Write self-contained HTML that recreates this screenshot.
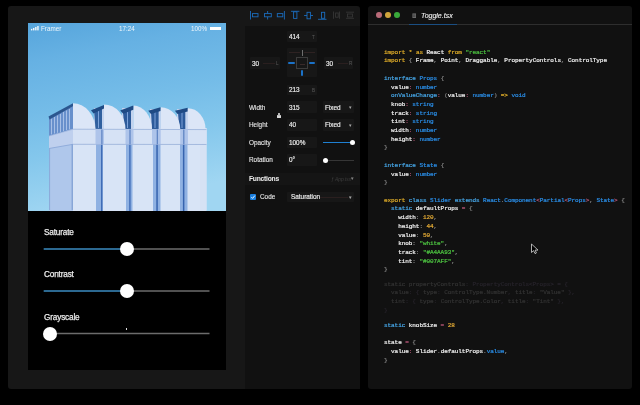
<!DOCTYPE html>
<html><head><meta charset="utf-8">
<style>
*{margin:0;padding:0;box-sizing:border-box}
html,body{width:640px;height:405px;overflow:hidden;background:#000}
body{position:relative;font-family:"Liberation Sans",sans-serif}
.a{position:absolute}
.lab,.pl,.iv,.code{will-change:transform}
#win1{position:absolute;left:8px;top:6px;width:352px;height:383px;background:#171717;border-radius:3px;overflow:hidden}
#props{position:absolute;left:245px;top:26px;width:115px;height:363px;background:#111111}
#phone{position:absolute;left:28px;top:23px;width:198px;height:347px;background:#000;overflow:hidden}
#win2{position:absolute;left:368px;top:6px;width:264px;height:383px;background:#111111;border-radius:3px;overflow:hidden}
.code{position:absolute;left:384.4px;font-family:"Liberation Mono",monospace;font-size:6.0px;letter-spacing:-0.064px;line-height:8px;white-space:pre;color:#f0f0f0;-webkit-text-stroke:0.22px currentColor}
.k{color:#dcaa28}.b{color:#45a3e3}.t{color:#2a8de6}.p{color:#a8506e}.g{color:#808080}.s{color:#4cc040}.n{color:#e0a834}.w{color:#ececec}
.d{color:#323232}.dd{color:#26232a}
.lab{position:absolute;color:#ececec;font-size:8.2px;letter-spacing:-0.15px;line-height:9px;white-space:nowrap;-webkit-text-stroke:0.25px currentColor}
.trk{position:absolute;height:1.4px;background:#6a6a6a}
.fil{position:absolute;height:1.4px;background:#3b8cc2}
.knob{position:absolute;width:14px;height:14px;border-radius:50%;background:#fff}
.pl{position:absolute;color:#e4e4e4;font-size:6.4px;line-height:7px;white-space:nowrap;-webkit-text-stroke:0.12px currentColor}
.inp{position:absolute;background:#171717;border-radius:1px}
.iv{position:absolute;color:#f0f0f0;font-size:6.4px;line-height:7px;white-space:nowrap;-webkit-text-stroke:0.15px currentColor}
.ic{position:absolute;background:#1f80d2}
.icg{position:absolute;background:#3a3a3a}
</style></head><body>
<div id="win1"></div>
<div id="props"></div>

<!-- toolbar icons -->
<div class="a" style="left:249px;top:10px;width:112px;height:11px">
</div>
<svg class="a" style="left:0;top:0" width="640" height="30">
  <g fill="none" stroke="#1b6cbc" stroke-width="0.9">
    <line x1="250.5" y1="11" x2="250.5" y2="19.5"/>
    <rect x="252.5" y="13.6" width="5.5" height="3.2"/>
    <line x1="267.6" y1="11" x2="267.6" y2="13.6"/><line x1="267.6" y1="16.8" x2="267.6" y2="19.5"/>
    <rect x="264.5" y="13.6" width="6.8" height="3.2"/>
    <rect x="277.3" y="13.6" width="5.5" height="3.2"/>
    <line x1="284.4" y1="11" x2="284.4" y2="19.5"/>
    <line x1="291" y1="11.3" x2="299.4" y2="11.3"/>
    <rect x="293.6" y="11.8" width="3.3" height="6.6"/>
    <line x1="304.1" y1="15.5" x2="307" y2="15.5"/><line x1="310.4" y1="15.5" x2="313" y2="15.5"/>
    <rect x="307" y="12.3" width="3.4" height="6.5"/>
    <line x1="318" y1="19.3" x2="326.5" y2="19.3"/>
    <rect x="321.5" y="12.3" width="3.2" height="6"/>
  </g>
  <g fill="none" stroke="#363636" stroke-width="0.9">
    <line x1="333.5" y1="11.5" x2="333.5" y2="18.8"/>
    <line x1="339.5" y1="11.5" x2="339.5" y2="18.8"/>
    <rect x="335.6" y="13" width="2.6" height="4.2"/>
    <line x1="346" y1="12.2" x2="354" y2="12.2"/>
    <line x1="346" y1="18.3" x2="354" y2="18.3"/>
    <rect x="347.5" y="14" width="5" height="3"/>
  </g>
</svg>

<!-- position widget -->
<div class="inp" style="left:287px;top:31px;width:30px;height:11px"></div>
<div class="iv" style="left:289px;top:33px">414</div>
<div class="pl" style="left:312.3px;top:33.5px;color:#5a5a5a;font-size:4.6px;-webkit-text-stroke:0px">T</div>

<div class="inp" style="left:250px;top:57px;width:30px;height:11.5px"></div>
<div class="iv" style="left:252px;top:59.7px">30</div>
<div class="a" style="left:263px;top:63px;width:12px;height:1px;background:#2a1f1f"></div>
<div class="pl" style="left:276px;top:60px;color:#5a5a5a;font-size:4.6px;-webkit-text-stroke:0px">L</div>

<div class="inp" style="left:324px;top:57px;width:29px;height:11.5px"></div>
<div class="iv" style="left:325.5px;top:59.7px">30</div>
<div class="a" style="left:338px;top:63px;width:10px;height:1px;background:#2a1f1f"></div>
<div class="pl" style="left:348.8px;top:60px;color:#5a5a5a;font-size:4.6px;-webkit-text-stroke:0px">R</div>

<div class="inp" style="left:287px;top:48px;width:30px;height:28.5px"></div>
<div class="a" style="left:289px;top:52.2px;width:11px;height:0.8px;background:#2e2222"></div>
<div class="a" style="left:304px;top:52.2px;width:11px;height:0.8px;background:#2e2222"></div>
<div class="a" style="left:301.5px;top:49.5px;width:1px;height:6px;background:#6e6e6e"></div>
<div class="a" style="left:296.1px;top:57.1px;width:11.6px;height:11.6px;border:1px solid #3c3c3c"></div>
<div class="a" style="left:300px;top:64px;width:4.5px;height:0.8px;background:#3a2a2a"></div>
<div class="a" style="left:288px;top:62px;width:6.8px;height:1.5px;border-radius:1px;background:#1b72c8"></div>
<div class="a" style="left:308.6px;top:62px;width:6.8px;height:1.5px;border-radius:1px;background:#1b72c8"></div>
<div class="a" style="left:301px;top:70px;width:1.6px;height:6px;border-radius:1px;background:#1b72c8"></div>

<div class="inp" style="left:287px;top:85px;width:30px;height:10px"></div>
<div class="iv" style="left:289px;top:85.8px">213</div>
<div class="pl" style="left:312.3px;top:86.5px;color:#5a5a5a;font-size:4.6px;-webkit-text-stroke:0px">B</div>

<!-- width / height / opacity / rotation -->
<div class="pl" style="left:249px;top:103.5px">Width</div>
<div class="inp" style="left:287px;top:101px;width:30px;height:12px"></div>
<div class="iv" style="left:288.5px;top:103.5px">315</div>
<div class="inp" style="left:323px;top:101px;width:31px;height:12px"></div>
<div class="iv" style="left:325px;top:103.5px">Fixed</div>
<div class="pl" style="left:349px;top:104px;color:#aaa;font-size:5px;-webkit-text-stroke:0px">&#9662;</div>

<div class="a" style="left:277.4px;top:115px;width:3.5px;height:3.2px;background:#d8d8d8;border-radius:0.6px"></div>
<div class="a" style="left:278.1px;top:113.2px;width:2.1px;height:2.6px;border:0.7px solid #bbb;border-bottom:none;border-radius:1px 1px 0 0"></div>

<div class="pl" style="left:249px;top:121px">Height</div>
<div class="inp" style="left:287px;top:119px;width:30px;height:11.5px"></div>
<div class="iv" style="left:288.5px;top:121px">40</div>
<div class="inp" style="left:323px;top:119px;width:31px;height:11.5px"></div>
<div class="iv" style="left:325px;top:121px">Fixed</div>
<div class="pl" style="left:349px;top:121.5px;color:#aaa;font-size:5px;-webkit-text-stroke:0px">&#9662;</div>

<div class="pl" style="left:249px;top:138.5px">Opacity</div>
<div class="inp" style="left:287px;top:136.5px;width:30px;height:11.5px"></div>
<div class="iv" style="left:288.5px;top:138.5px">100%</div>
<div class="a" style="left:323px;top:142.3px;width:29px;height:1.2px;background:#1f80d2"></div>
<div class="a" style="left:349.5px;top:140.3px;width:5px;height:5px;border-radius:50%;background:#fff"></div>

<div class="pl" style="left:249px;top:156px">Rotation</div>
<div class="inp" style="left:287px;top:154px;width:30px;height:11.5px"></div>
<div class="iv" style="left:288.5px;top:156px">0°</div>
<div class="a" style="left:325px;top:159.5px;width:29px;height:1px;background:#363636"></div>
<div class="a" style="left:322.5px;top:157.7px;width:5px;height:5px;border-radius:50%;background:#fff"></div>

<!-- functions -->
<div class="a" style="left:245px;top:173px;width:115px;height:11.5px;background:#151515"></div>
<div class="pl" style="left:249px;top:175.2px;font-weight:bold;font-size:6.7px;letter-spacing:-0.22px;color:#e8e8e8;-webkit-text-stroke:0.05px currentColor">Functions</div>
<div class="pl" style="left:330.5px;top:175.8px;color:#3e3e3e;font-size:4.9px;font-style:italic;-webkit-text-stroke:0px">ƒ App.tsx</div>
<div class="pl" style="left:351px;top:175px;color:#888;font-size:4.5px">&#9662;</div>

<div class="a" style="left:249.5px;top:194.2px;width:6px;height:6px;background:#1a7fe0;border-radius:1px"></div>
<svg class="a" style="left:249.5px;top:194.2px" width="6" height="6"><path d="M1.3 3.1 L2.6 4.4 L4.8 1.6" stroke="#fff" stroke-width="0.9" fill="none"/></svg>
<div class="pl" style="left:260px;top:193px">Code</div>
<div class="inp" style="left:287px;top:191.5px;width:67px;height:10.5px"></div>
<div class="iv" style="left:290.5px;top:193px">Saturation</div>
<div class="a" style="left:320px;top:196.5px;width:28px;height:0.6px;background:#2a1f1f"></div>
<div class="pl" style="left:349px;top:193.5px;color:#aaa;font-size:4.5px">&#9662;</div>

<!-- phone -->
<div id="phone">
<svg class="a" style="left:0;top:0" width="198" height="187.6" viewBox="28 23 198 187.6" preserveAspectRatio="none">
  <defs>
    <linearGradient id="sky" x1="0" y1="0" x2="0.2" y2="1">
      <stop offset="0" stop-color="#56a5dc"/>
      <stop offset="0.2" stop-color="#66b1e3"/>
      <stop offset="0.47" stop-color="#74bce8"/>
      <stop offset="0.7" stop-color="#84c7ec"/>
      <stop offset="1" stop-color="#a0d6f2"/>
    </linearGradient>
    <linearGradient id="face" x1="0" y1="0" x2="0" y2="1">
      <stop offset="0" stop-color="#c5d6f0"/>
      <stop offset="1" stop-color="#b4c8ea"/>
    </linearGradient>
  </defs>
  <rect x="28" y="23" width="198" height="188" fill="url(#sky)"/>
  <!-- lower body -->
  <rect x="72" y="128" width="134.5" height="83" fill="#d8e4f6"/>
  <rect x="200" y="128" width="6.5" height="82" fill="#d6e2f4"/>
  <!-- left face -->
  <polygon points="49,117 73,104 73,211 49,211" fill="#afc7eb"/>
  <line x1="49.6" y1="148" x2="49.6" y2="210" stroke="#7f9fd2" stroke-width="0.8"/>
  <line x1="72.2" y1="128" x2="72.2" y2="210" stroke="#6f92cc" stroke-width="0.9"/>
  <!-- gaps -->
  <rect x="96" y="110" width="7" height="101" fill="#8fb1e2"/>
  <rect x="101" y="110" width="1.4" height="101" fill="#3f6cb6"/>
  <rect x="126" y="110" width="6.5" height="101" fill="#8fb1e2"/>
  <rect x="129.2" y="110" width="1.4" height="101" fill="#3f6cb6"/>
  <rect x="153" y="110" width="7.5" height="101" fill="#8fb1e2"/>
  <rect x="156.3" y="110" width="1.5" height="101" fill="#3663ae"/>
  <rect x="180" y="110" width="7.5" height="101" fill="#8fb1e2"/>
  <rect x="182.9" y="110" width="1.5" height="101" fill="#3663ae"/>
  <!-- glass -->
  <polygon points="49,119 73,106 73,129 49,136" fill="#6890cc"/>
  <g stroke="#c2d4f0" stroke-width="0.7">
    <line x1="51.5" y1="118.5" x2="51.5" y2="134.5"/>
    <line x1="54.5" y1="117" x2="54.5" y2="133.5"/>
    <line x1="57.5" y1="115.5" x2="57.5" y2="132.8"/>
    <line x1="60.5" y1="114" x2="60.5" y2="132"/>
    <line x1="63.5" y1="112" x2="63.5" y2="131"/>
    <line x1="66.5" y1="110.5" x2="66.5" y2="130.2"/>
    <line x1="69.5" y1="109" x2="69.5" y2="129.5"/>
  </g>
  <rect x="94" y="108" width="10" height="21" fill="#c3d3ee"/>
  <rect x="122" y="108" width="11.5" height="21" fill="#c3d3ee"/>
  <rect x="150" y="109" width="10.7" height="20" fill="#c3d3ee"/>
  <rect x="177" y="109" width="11" height="20" fill="#c3d3ee"/>
  <polygon points="94,110 102,108 102,129 95.5,129" fill="#30609f"/>
  <polygon points="123,112 131,109 131,129 124.5,129" fill="#2c5a9a"/>
  <polygon points="151,112 158.6,109.5 158.6,129 152,129" fill="#2c5a9a"/>
  <polygon points="178,112 185.3,110 185.3,129 179.2,129" fill="#2c5a9a"/>
  <g stroke="#86aae0" stroke-width="0.9">
    <line x1="98.5" y1="110" x2="98.5" y2="128"/>
    <line x1="127.5" y1="112" x2="127.5" y2="128"/>
    <line x1="155" y1="112" x2="155" y2="128"/>
    <line x1="182" y1="112" x2="182" y2="128"/>
  </g>
  <!-- roofs -->
  <path d="M73.0 129.5 L73.0 103.3 A22.3 26.2 0 0 1 95.3 129.5 Z" fill="#dce6f7"/>
  <path d="M104.0 129.5 L104.0 104.4 A21.5 25.1 0 0 1 125.5 129.5 Z" fill="#dce6f7"/>
  <path d="M133.5 129.5 L133.5 105.6 A18.4 23.9 0 0 1 151.9 129.5 Z" fill="#dce6f7"/>
  <path d="M160.7 129.5 L160.7 107.2 A19.6 22.3 0 0 1 180.3 129.5 Z" fill="#dce6f7"/>
  <path d="M187.9 129.5 L187.9 108.2 A17.7 21.3 0 0 1 205.6 129.5 Z" fill="#dce6f7"/>
  <!-- dark roof strips -->
  <polygon points="48.5,116.5 73,103.3 73,106.3 49.5,119.5" fill="#2b568f"/>
  <polygon points="91,110.2 104,105.1 104,108.6 93.5,113.5" fill="#1f4a84"/>
  <polygon points="120.2,110.4 133.3,105.6 133.3,109.8 123.2,113.8" fill="#1f4a84"/>
  <polygon points="148.2,110.8 160.5,107.3 160.5,111 151,114" fill="#1f4a84"/>
  <polygon points="174.9,110.8 187.6,107.8 187.6,111.5 177.5,114" fill="#1f4a84"/>
  <!-- band -->
  <rect x="73" y="129" width="133.5" height="15.3" fill="#d6e2f5"/>
  <polygon points="49,136 73,129 73,144.3 49,148.5" fill="#bfd0ee"/>
  <line x1="73" y1="129.2" x2="206.5" y2="129.6" stroke="#90aad6" stroke-width="0.7"/>
  <line x1="73" y1="144.3" x2="206.5" y2="144.5" stroke="#8ea8d4" stroke-width="0.7"/>
  <line x1="49" y1="148.5" x2="73" y2="144.3" stroke="#7f9fd2" stroke-width="0.7"/>
  <line x1="49" y1="136" x2="73" y2="129.2" stroke="#90aad6" stroke-width="0.6"/>
  <g fill="#aec4ea">
    <rect x="95.5" y="129.5" width="8.5" height="14.8"/>
    <rect x="125.5" y="129.5" width="8" height="14.8"/>
    <rect x="152" y="129.5" width="8.7" height="14.8"/>
    <rect x="180.2" y="129.5" width="7.7" height="14.8"/>
  </g>
  <g fill="#5a80c0">
    <rect x="101.3" y="129.5" width="1.2" height="14.8"/>
    <rect x="129.4" y="129.5" width="1.2" height="14.8"/>
    <rect x="156.7" y="129.5" width="1.2" height="14.8"/>
    <rect x="183.2" y="129.5" width="1.2" height="14.8"/>
  </g>
</svg>
<!-- status bar -->
<svg class="a" style="left:2.8px;top:3.3px" width="10" height="6">
  <rect x="0" y="2.9" width="1.3" height="1.5" fill="#fff"/>
  <rect x="2.1" y="2" width="1.3" height="2.4" fill="#fff"/>
  <rect x="4.2" y="1" width="1.3" height="3.4" fill="#fff"/>
  <rect x="6.3" y="0" width="1.3" height="4.4" fill="#fff"/>
</svg>
<div class="a" style="left:13.3px;top:1.6px;font-size:6.3px;line-height:8px;color:#eef6fc;will-change:transform">Framer</div>
<div class="a" style="left:91.4px;top:1.6px;font-size:6.3px;line-height:8px;color:#eef6fc;will-change:transform">17:24</div>
<div class="a" style="left:162.5px;top:1.6px;font-size:6.3px;line-height:8px;color:#eef6fc;will-change:transform">100%</div>
<div class="a" style="left:182px;top:4px;width:11px;height:3.2px;background:#fff"></div>
<!-- sliders -->
<div class="lab" style="left:15.7px;top:205px">Saturate</div>
<svg class="a" style="left:0;top:0" width="197" height="347">
  <g stroke-width="1.5">
    <line x1="15.7" y1="225.9" x2="99" y2="225.9" stroke="#3b8cc2"/>
    <line x1="99" y1="225.9" x2="181.5" y2="225.9" stroke="#6c6c6c"/>
    <line x1="15.7" y1="268" x2="99" y2="268" stroke="#3b8cc2"/>
    <line x1="99" y1="268" x2="181.5" y2="268" stroke="#6c6c6c"/>
    <line x1="15.7" y1="310.5" x2="181.5" y2="310.5" stroke="#6c6c6c"/>
  </g>
</svg>
<div class="knob" style="left:92.2px;top:218.9px"></div>

<div class="lab" style="left:15.7px;top:247px">Contrast</div>
<div class="knob" style="left:92.2px;top:261px"></div>

<div class="lab" style="left:15.7px;top:290px">Grayscale</div>
<div class="knob" style="left:15.1px;top:303.5px"></div>
<div class="a" style="left:98.3px;top:305.4px;width:1.2px;height:1.2px;background:#ddd"></div>

</div>

<!-- code window -->
<div id="win2">
  <div class="a" style="left:0;top:18px;width:264px;height:1px;background:#2e2e2e"></div>
  <div class="a" style="left:41px;top:18px;width:47.5px;height:1px;background:#1a4e82"></div>
  <div class="a" style="left:7.8px;top:6.4px;width:5.8px;height:5.8px;border-radius:50%;background:#b86a78"></div>
  <div class="a" style="left:16.9px;top:6.4px;width:5.8px;height:5.8px;border-radius:50%;background:#cfa43c"></div>
  <div class="a" style="left:26px;top:6.4px;width:5.8px;height:5.8px;border-radius:50%;background:#39a83a"></div>
  <svg class="a" style="left:43.5px;top:7px" width="5" height="6"><rect x="0.4" y="0.4" width="3.6" height="4.6" fill="#6a6a6a"/><line x1="1" y1="2" x2="3.4" y2="2" stroke="#222" stroke-width="0.5"/><line x1="1" y1="3.3" x2="3.4" y2="3.3" stroke="#222" stroke-width="0.5"/></svg>
  <div class="a" style="left:52.5px;top:5px;font-size:7px;line-height:9px;color:#f0f0f0;font-style:italic;will-change:transform;-webkit-text-stroke:0.12px currentColor">Toggle.tsx</div>
</div>
<div class="code" style="top:48.71px"><span class="k">import</span><span class="w"> </span><span class="k">*</span><span class="w"> </span><span class="k">as</span><span class="w"> React </span><span class="k">from</span><span class="w"> </span><span class="s">&quot;react&quot;</span></div>
<div class="code" style="top:57.42px"><span class="k">import</span><span class="w"> </span><span class="g">{</span><span class="w"> Frame</span><span class="g">,</span><span class="w"> Point</span><span class="g">,</span><span class="w"> Draggable</span><span class="g">,</span><span class="w"> PropertyControls</span><span class="g">,</span><span class="w"> ControlType</span></div>
<div class="code" style="top:74.83px"><span class="b">interface</span><span class="w"> </span><span class="t">Props</span><span class="w"> </span><span class="g">{</span></div>
<div class="code" style="top:83.53px"><span class="w">  value</span><span class="p">:</span><span class="w"> </span><span class="t">number</span></div>
<div class="code" style="top:92.24px"><span class="b">  onValueChange</span><span class="p">:</span><span class="w"> </span><span class="g">(</span><span class="w">value</span><span class="p">:</span><span class="w"> </span><span class="t">number</span><span class="g">)</span><span class="w"> </span><span class="k">=&gt;</span><span class="w"> </span><span class="t">void</span></div>
<div class="code" style="top:100.95px"><span class="w">  knob</span><span class="p">:</span><span class="w"> </span><span class="t">string</span></div>
<div class="code" style="top:109.65px"><span class="w">  track</span><span class="p">:</span><span class="w"> </span><span class="t">string</span></div>
<div class="code" style="top:118.36px"><span class="w">  tint</span><span class="p">:</span><span class="w"> </span><span class="t">string</span></div>
<div class="code" style="top:127.06px"><span class="w">  width</span><span class="p">:</span><span class="w"> </span><span class="t">number</span></div>
<div class="code" style="top:135.77px"><span class="w">  height</span><span class="p">:</span><span class="w"> </span><span class="t">number</span></div>
<div class="code" style="top:144.48px"><span class="g">}</span></div>
<div class="code" style="top:161.89px"><span class="b">interface</span><span class="w"> </span><span class="t">State</span><span class="w"> </span><span class="g">{</span></div>
<div class="code" style="top:170.59px"><span class="w">  value</span><span class="p">:</span><span class="w"> </span><span class="t">number</span></div>
<div class="code" style="top:179.30px"><span class="g">}</span></div>
<div class="code" style="top:196.71px"><span class="k">export</span><span class="w"> </span><span class="b">class</span><span class="w"> </span><span class="t">Slider</span><span class="w"> </span><span class="b">extends</span><span class="w"> </span><span class="t">React</span><span class="g">.</span><span class="t">Component</span><span class="p">&lt;</span><span class="t">Partial</span><span class="p">&lt;</span><span class="t">Props</span><span class="p">&gt;</span><span class="g">,</span><span class="w"> </span><span class="t">State</span><span class="p">&gt;</span><span class="w"> </span><span class="g">{</span></div>
<div class="code" style="top:205.42px"><span class="b">  static</span><span class="w"> defaultProps </span><span class="p">=</span><span class="w"> </span><span class="g">{</span></div>
<div class="code" style="top:214.12px"><span class="w">    width</span><span class="g">:</span><span class="w"> </span><span class="n">120</span><span class="g">,</span></div>
<div class="code" style="top:222.83px"><span class="w">    height</span><span class="g">:</span><span class="w"> </span><span class="n">44</span><span class="g">,</span></div>
<div class="code" style="top:231.54px"><span class="w">    value</span><span class="g">:</span><span class="w"> </span><span class="n">50</span><span class="g">,</span></div>
<div class="code" style="top:240.24px"><span class="w">    knob</span><span class="g">:</span><span class="w"> </span><span class="s">&quot;white&quot;</span><span class="g">,</span></div>
<div class="code" style="top:248.95px"><span class="w">    track</span><span class="g">:</span><span class="w"> </span><span class="s">&quot;#A4AA93&quot;</span><span class="g">,</span></div>
<div class="code" style="top:257.65px"><span class="w">    tint</span><span class="g">:</span><span class="w"> </span><span class="s">&quot;#007AFF&quot;</span><span class="g">,</span></div>
<div class="code" style="top:266.36px"><span class="g">}</span></div>
<div class="code" style="top:280.72px"><span class="d">static propertyControls</span><span class="dd">: PropertyControls&lt;Props&gt; = {</span></div>
<div class="code" style="top:289.43px"><span class="d">  value</span><span class="dd">: { </span><span class="d">type</span><span class="dd">: </span><span class="d">ControlType.Number</span><span class="dd">, </span><span class="d">title</span><span class="dd">: </span><span class="d">&quot;Value&quot;</span><span class="dd"> },</span></div>
<div class="code" style="top:298.14px"><span class="d">  tint</span><span class="dd">: { </span><span class="d">type</span><span class="dd">: </span><span class="d">ControlType.Color</span><span class="dd">, </span><span class="d">title</span><span class="dd">: </span><span class="d">&quot;Tint&quot;</span><span class="dd"> },</span></div>
<div class="code" style="top:306.84px"><span class="dd">}</span></div>
<div class="code" style="top:321.90px"><span class="b">static</span><span class="w"> knobSize </span><span class="p">=</span><span class="w"> </span><span class="n">28</span></div>
<div class="code" style="top:339.32px"><span class="w">state </span><span class="p">=</span><span class="w"> </span><span class="g">{</span></div>
<div class="code" style="top:348.02px"><span class="w">  value</span><span class="p">:</span><span class="w"> Slider</span><span class="g">.</span><span class="w">defaultProps</span><span class="g">.</span><span class="t">value</span><span class="g">,</span></div>
<div class="code" style="top:356.73px"><span class="g">}</span></div>
<svg class="a" style="left:529px;top:242px" width="12" height="14"><path d="M2.5 2 L2.5 10.5 L4.6 8.6 L6 11.6 L7.4 11 L6.1 8.1 L9 8.1 Z" fill="#000" stroke="#d8d8d8" stroke-width="0.8"/></svg>
</body></html>
